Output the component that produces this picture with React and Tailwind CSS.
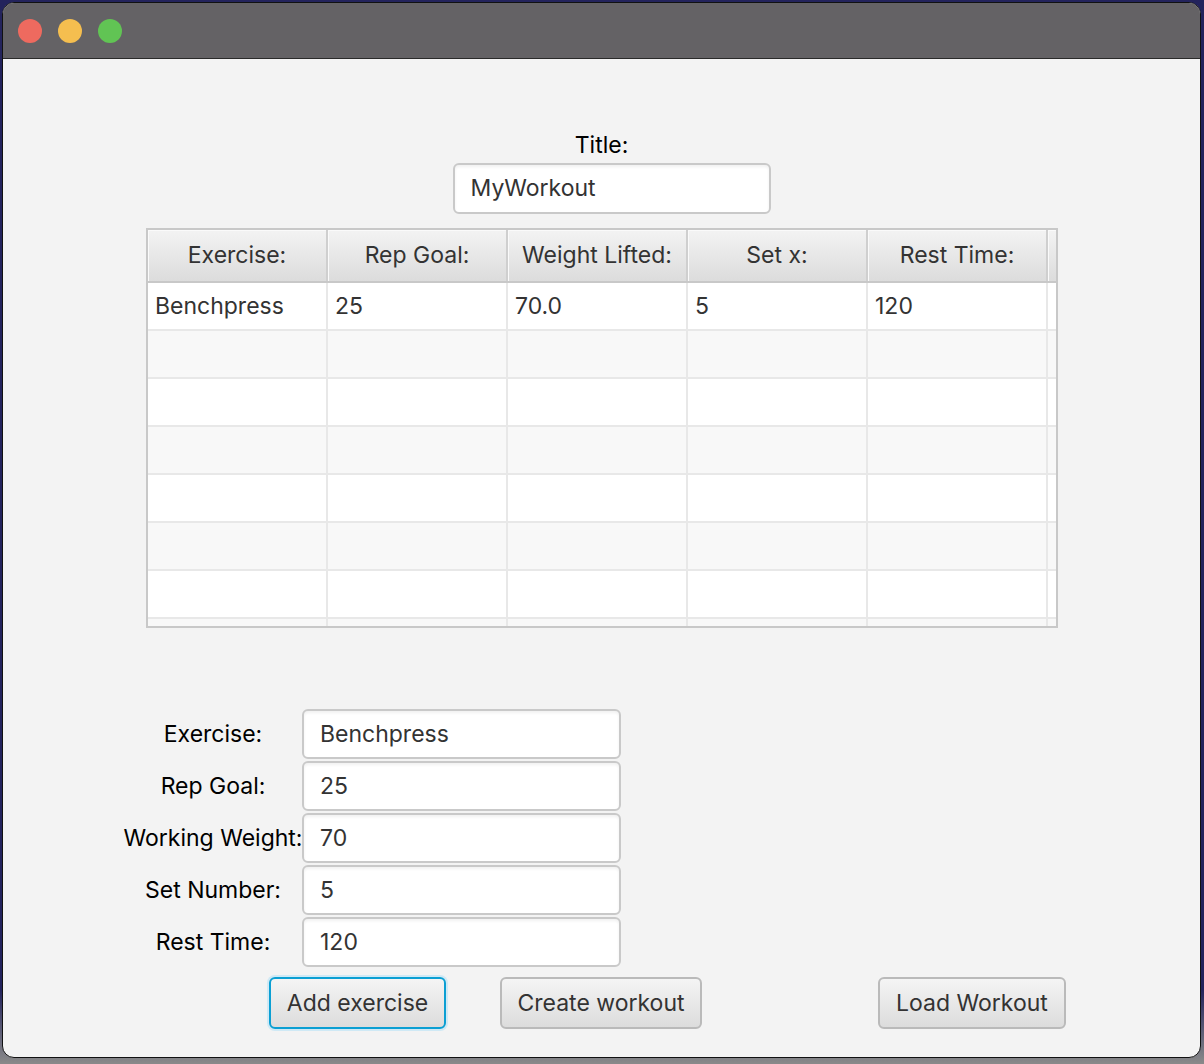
import React from "react";

const font = { fontFamily: "Inter, 'Noto Sans', sans-serif" };

const cols = ["Exercise:", "Rep Goal:", "Weight Lifted:", "Set x:", "Rest Time:"];
const rows = [
  ["Benchpress", "25", "70.0", "5", "120"],
  ["", "", "", "", ""],
  ["", "", "", "", ""],
  ["", "", "", "", ""],
  ["", "", "", "", ""],
  ["", "", "", "", ""],
  ["", "", "", "", ""],
  ["", "", "", "", ""],
];

function Field({ value, className = "" }) {
  return (
    <div
      className={
        "flex items-center bg-white border-2 border-[#c9c9c9] rounded-[6px] px-[16px] text-[23px] text-[#333] shadow-[inset_0_2px_3px_rgba(0,0,0,0.06)] " +
        className
      }
    >
      {value}
    </div>
  );
}

function Button({ children, focused, className = "" }) {
  return (
    <div
      className={
        "flex items-center justify-center h-[52px] rounded-[6px] text-[23px] text-[#333] bg-[linear-gradient(to_bottom,#f4f4f4,#dcdcdc)] " +
        (focused
          ? "border-2 border-[#0b9fd3] shadow-[0_0_0_2px_#cfe9f5] "
          : "border-2 border-[#bababa] ") +
        className
      }
    >
      {children}
    </div>
  );
}

export default function App() {
  return (
    <div
      className="w-[1204px] h-[1064px] overflow-hidden bg-[linear-gradient(to_bottom,#23235c_0%,#23235c_93%,#8a8a8a_100%)] pt-[2px] pl-[2px] pr-[3px]"
      style={font}
    >
      <div className="h-[1056px] rounded-[12px] overflow-hidden border border-[#111] bg-[#f3f3f3] flex flex-col">
        {/* title bar */}
        <div className="h-[56px] shrink-0 bg-[#646265] border-b border-[#2a2a2a] flex items-center pl-[15px] gap-[16px]">
          <div className="w-[24px] h-[24px] rounded-full bg-[#ee6a5f]" />
          <div className="w-[24px] h-[24px] rounded-full bg-[#f5be4f]" />
          <div className="w-[24px] h-[24px] rounded-full bg-[#61c454]" />
        </div>

        {/* content */}
        <div className="flex flex-col">
          <div className="flex flex-col items-center pt-[73px]">
            <div className="text-[23px] leading-[26px] text-black">Title:</div>
            <Field value="MyWorkout" className="mt-[5px] ml-[20px] w-[318px] h-[51px]" />
          </div>

          {/* table */}
          <div className="ml-[143px] mt-[14px] w-[912px] h-[400px] border-2 border-[#c8c8c8] bg-white flex flex-col overflow-hidden">
            <div className="flex h-[53px] shrink-0 border-b-2 border-[#c8c8c8]">
              {cols.map((c) => (
                <div
                  key={c}
                  className="w-[180px] shrink-0 flex items-center justify-center text-[23px] text-[#333] bg-[linear-gradient(to_bottom,#f3f3f3,#dcdcdc)] border-r-2 border-[#cfcfcf] shadow-[inset_1px_1px_0_#fafafa]"
                >
                  {c}
                </div>
              ))}
              <div className="flex-1 bg-[linear-gradient(to_bottom,#f3f3f3,#dcdcdc)] shadow-[inset_1px_1px_0_#fafafa]" />
            </div>
            <div className="flex flex-col">
              {rows.map((r, i) => (
                <div
                  key={i}
                  className={
                    "flex h-[48px] shrink-0 border-b-2 border-[#e8e8e8] " +
                    (i % 2 === 1 ? "bg-[#f8f8f8]" : "bg-white")
                  }
                >
                  {r.map((v, j) => (
                    <div
                      key={j}
                      className="w-[180px] shrink-0 flex items-center pl-[7px] text-[23px] text-[#333] border-r-2 border-[#e8e8e8]"
                    >
                      {v}
                    </div>
                  ))}
                  <div className="flex-1" />
                </div>
              ))}
            </div>
          </div>

          {/* form */}
          <div className="flex flex-col gap-[2px] mt-[81px] ml-[121px]">
            {[
              ["Exercise:", "Benchpress"],
              ["Rep Goal:", "25"],
              ["Working Weight:", "70"],
              ["Set Number:", "5"],
              ["Rest Time:", "120"],
            ].map(([l, v]) => (
              <div key={l} className="flex items-center h-[50px]">
                <div className="w-[178px] flex justify-center">
                  <span className="whitespace-nowrap text-[23px] text-black">{l}</span>
                </div>
                <Field value={v} className="w-[319px] h-[50px]" />
              </div>
            ))}
          </div>

          {/* buttons */}
          <div className="flex mt-[10px] pl-[266px]">
            <Button focused className="w-[177px]">Add exercise</Button>
            <Button className="w-[202px] ml-[54px]">Create workout</Button>
            <Button className="w-[188px] ml-[176px]">Load Workout</Button>
          </div>
        </div>
      </div>
    </div>
  );
}
